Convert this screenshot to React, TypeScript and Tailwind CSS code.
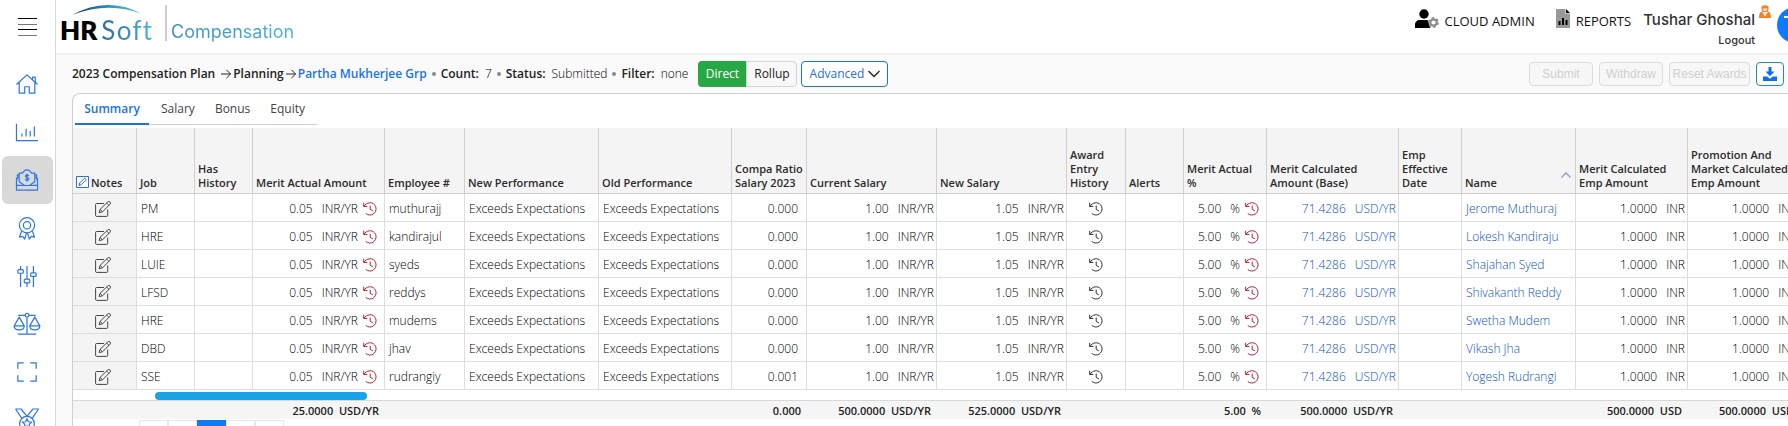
import React from "react";

type IconProps = { className?: string };

const HistoryIcon = ({ className = "" }: IconProps) => (
  <svg viewBox="0 0 14 14" className={`h-3.5 w-3.5 shrink-0 ${className}`} fill="none" stroke="currentColor" strokeWidth="1" strokeLinecap="round" strokeLinejoin="round" aria-hidden="true">
    <path d="M.7 1.2v3.2h3.3M1 4.200C3.400 .1 9 -.3 11.600 2.800c3.400 4.200.4 10.400-5 10.200-1.400-.1-2.600-.6-3.500-1.300" />
    <path d="M7.200 4v3.400l2.300 1.200" />
  </svg>
);

const EditIcon = () => (
  <svg viewBox="0 0 16 16" className="h-4 w-4" fill="none" stroke="currentColor" strokeWidth="1" strokeLinejoin="round" aria-hidden="true">
    <path d="M9 2.500H1.500A1 1 0 0 0 .6 3.400v11a1 1 0 0 0 .9 1h10.200a1 1 0 0 0 1-1V8.500" />
    <path d="M4.200 11.600l.8-3.200L12.600 1a1.600 1.600 0 0 1 2.400 2.300l-7.500 7.500zM5 8.400l2.500 2.400M11.500 2l2.500 2.400" />
  </svg>
);

const SideIcon = ({ children }: { children: React.ReactNode }) => (
  <svg viewBox="0 0 24 24" className="h-[22px] w-[22px] overflow-visible" fill="none" stroke="currentColor" strokeWidth="1.300" strokeLinejoin="round" aria-hidden="true">
    {children}
  </svg>
);

const nav: { label: string; active?: boolean; icon: React.ReactNode }[] = [
  { label: "Home", icon: <path d="M.5 12.500L12 2l11.500 10.500M3.500 10v12h6v-7h5v7h6V10M18 7.500V4.500h3v6" /> },
  { label: "Dashboards", icon: <path d="M.5 3v18.500H24M6.500 17v-3.500M11 17V8.500M15.500 17v-6M20 17V6" /> },
  {
    label: "Compensation",
    active: true,
    icon: (
      <>
        <path d="M3 8.500L.5 10.500v12.500h23V10.500L21 8.500M.5 17.500l7 .5h9l7-.5" />
        <path d="M3.500 4.500H7L9 2q3-2 6 0l2 2.500h3.500v9.500L14.500 18h-5L3.500 14zM3.500 6.500h-2v5M20.500 6.500h2v5" />
        <path d="M14 7.500c-.5-1-3.800-1.200-3.800.5s3.900 1 3.900 2.900c0 1.800-3.700 1.500-4.200.4M12 5v9" />
      </>
    ),
  },
  {
    label: "Awards",
    icon: (
      <>
        <circle cx="12" cy="9" r="8.300" />
        <circle cx="12" cy="9" r="4" />
        <path d="M6 15.500L3.800 22l3.400-.8L9.500 24l2-6.700M18 15.500l2.200 6.500-3.400-.8L14.500 24l-2-6.700" />
      </>
    ),
  },
  {
    label: "Adjustments",
    icon: (
      <>
        <path d="M5 1v4M5 9v15M12 1v14.500M12 19.500V24M19 1v7.500M19 12.500V24" />
        <rect x="2" y="5" width="6" height="4" rx="1" />
        <rect x="9" y="15.500" width="6" height="4" rx="1" />
        <rect x="16" y="8.500" width="6" height="4" rx="1" />
      </>
    ),
  },
  {
    label: "Balance",
    icon: (
      <>
        <path d="M2.500 2.500H10M14 2.500h7.500M12 4.500V23M2 23h20" />
        <circle cx="12" cy="2.500" r="2" />
        <path d="M3.500 4.500L-2 14c0 6 11 6 11 0zM20.500 4.500L15 14c0 6 11 6 11 0zM-2 14H9M15 14h11" />
      </>
    ),
  },
  { label: "Full screen", icon: <path d="M2 8.500V2h6.500M15.500 2H22v6.500M22 15.500V22h-6.500M8.500 22H2v-6.500" /> },
  {
    label: "Recognition",
    icon: (
      <>
        <path d="M-.5 0h6L12 8l6.500-8h6L17.500 10.500M-.5 0L6.500 10.500" />
        <circle cx="12" cy="16" r="8" />
        <path d="M12 10.500l1.500 3.400 3.700.4-2.800 2.400.8 3.600-3.200-1.900-3.200 1.900.8-3.600-2.800-2.400 3.700-.4z" />
      </>
    ),
  },
];

const rows = [
  { job: "PM", id: "muthurajj", ratio: "0.000", name: "Jerome Muthuraj" },
  { job: "HRE", id: "kandirajul", ratio: "0.000", name: "Lokesh Kandiraju" },
  { job: "LUIE", id: "syeds", ratio: "0.000", name: "Shajahan Syed" },
  { job: "LFSD", id: "reddys", ratio: "0.000", name: "Shivakanth Reddy" },
  { job: "HRE", id: "mudems", ratio: "0.000", name: "Swetha Mudem" },
  { job: "DBD", id: "jhav", ratio: "0.000", name: "Vikash Jha" },
  { job: "SSE", id: "rudrangiy", ratio: "0.001", name: "Yogesh Rudrangi" },
];

const columns = [
  { label: "Notes", width: 64 },
  { label: "Job", width: 58 },
  { label: "Has History", width: 58 },
  { label: "Merit Actual Amount", width: 132 },
  { label: "Employee #", width: 80 },
  { label: "New Performance", width: 134 },
  { label: "Old Performance", width: 133 },
  { label: "Compa Ratio Salary 2023", width: 75 },
  { label: "Current Salary", width: 130 },
  { label: "New Salary", width: 130 },
  { label: "Award Entry History", width: 59 },
  { label: "Alerts", width: 58 },
  { label: "Merit Actual\n%", width: 83 },
  { label: "Merit Calculated Amount (Base)", width: 132 },
  { label: "Emp Effective Date", width: 63 },
  { label: "Name", width: 114 },
  { label: "Merit Calculated Emp Amount", width: 112 },
  { label: "Promotion And Market Calculated Emp Amount", width: 112 },
];

const totals = ["", "", "", "25.0000 USD/YR", "", "", "", "0.000", "500.0000 USD/YR", "525.0000 USD/YR", "", "", "5.00 %", "500.0000 USD/YR", "", "", "500.0000 USD", "500.0000 USD"];

const Cell = ({ children, className = "px-1" }: { children?: React.ReactNode; className?: string }) => (
  <td className={`h-7 border-r border-b border-[#dedede] pt-0.5 pb-0 whitespace-nowrap ${className}`}>{children}</td>
);

const Amount = ({ value, unit, history = false }: { value: string; unit: string; history?: boolean }) => (
  <div className="flex items-center justify-end">
    <span>{value}</span>
    <span className="ml-[9px]">{unit}</span>
    {history && <HistoryIcon className="ml-[5px] text-[#b3202f]" />}
  </div>
);

function Sidebar() {
  return (
    <aside className="flex w-14 shrink-0 flex-col items-center border-r border-[#d8d8d8] bg-white">
      <button aria-label="Menu" className="mt-[18px] flex h-[18px] w-[19px] shrink-0 flex-col justify-between">
        <span className="h-px w-full bg-black" />
        <span className="h-px w-full bg-[#777]" />
        <span className="h-px w-full bg-black" />
        <span className="h-px w-full bg-[#777]" />
      </button>
      <nav className="mt-6 flex flex-col">
        {nav.map((n) => (
          <a
            key={n.label}
            href="#"
            aria-label={n.label}
            className={`flex h-12 w-[51px] shrink-0 items-center justify-center rounded-md pr-0.5 text-[#2b76e8] ${n.active ? "bg-[#d9d9d9]" : ""}`}
          >
            <SideIcon>{n.icon}</SideIcon>
          </a>
        ))}
      </nav>
    </aside>
  );
}

function Header() {
  return (
    <header className="flex h-[55px] shrink-0 border-b-2 border-[#f1f1f1] bg-white">
      <div className="flex pl-1">
        <div className="w-[93px] pt-[5px]">
          <svg viewBox="0 0 72 11" className="ml-3 h-[11px] w-[72px]" aria-hidden="true">
            <defs>
              <linearGradient id="arc">
                <stop offset="0" stopColor="#12344f" />
                <stop offset=".5" stopColor="#2a8fc4" />
                <stop offset="1" stopColor="#55bfe6" />
              </linearGradient>
            </defs>
            <path d="M0 10Q36-9.500 70 9Q36-4 0 10z" fill="url(#arc)" />
          </svg>
          <div className="flex items-baseline font-['Lato'] text-[26px] leading-7">
            <span className="font-extrabold text-black">HR</span>
            <span className="ml-1 bg-linear-to-r from-[#2d6c9c] to-[#4db6df] bg-clip-text tracking-wider text-transparent">Soft</span>
          </div>
        </div>
        <div className="mt-[5px] ml-3 h-9 w-0.5 self-start bg-[#d0cdcd]" />
        <span className="mt-[18px] ml-1 bg-linear-to-r from-[#3f8fb8] to-[#4cb4dc] bg-clip-text font-['Inter'] text-lg leading-7 text-transparent">Compensation</span>
      </div>
      <div className="ml-auto flex items-start whitespace-nowrap">
        <a href="#" className="mt-[9px] flex items-start text-[13px] text-[#111]">
          <svg viewBox="0 0 24 20" className="mr-1.5 h-5 w-6" aria-hidden="true">
            <circle cx="9" cy="5" r="4.700" fill="#000" />
            <path d="M0 19v-3c0-3 2-5 5-5h7c2 0 2 8 4 8z" fill="#000" />
            <circle cx="18.500" cy="13.500" r="3.200" fill="#fff" stroke="#8a8a8a" strokeWidth="2.200" />
            <circle cx="18.500" cy="13.500" r="4.700" fill="none" stroke="#8a8a8a" strokeWidth="1.400" strokeDasharray="2.500 2.420" />
          </svg>
          <span className="pt-0.5 leading-5">CLOUD ADMIN</span>
        </a>
        <a href="#" className="mt-[9px] ml-[21px] flex items-start text-[13px] text-[#111]">
          <svg viewBox="0 0 14 19" className="mr-1.5 h-[19px] w-3.5" aria-hidden="true">
            <path d="M0 0h9.500v4.500H14V19H0z" fill="#999" />
            <path d="M10 0l4 4h-4zM2.500 12h2v4h-2zM6 9h2v7H6zM9.500 11h2v5h-2z" fill="#000" />
          </svg>
          <span className="pt-0.5 leading-5">REPORTS</span>
        </a>
        <div className="ml-3 flex flex-col items-end pt-2 font-['Inter'] text-[#333]">
          <span className="text-[15px] leading-6 font-medium">Tushar Ghoshal</span>
          <a href="#" className="text-[11px] leading-4 font-medium">Logout</a>
        </div>
        <svg viewBox="0 0 12 13" className="mt-[5px] ml-1 h-[13px] w-3" aria-hidden="true">
          <path d="M2.500 1.500Q6-1 9.500 1.500v3L8.500 7h-5L2.500 4.500zM0 13Q0 6.500 3 6.500l3 5 3-5q3 0 3 6.500z" fill="#f58220" />
          <path d="M3.500 3.500h5L7.500 6h-3zM4 8l2 3.500L8 8z" fill="#fbe0c8" />
        </svg>
        <div className="mt-[7px] ml-1.5 w-[11px] overflow-hidden">
          <svg viewBox="0 0 36 36" className="h-9 w-9 max-w-none" role="img" aria-label="Profile">
            <circle cx="18" cy="18" r="18" fill="#0d7bff" />
            <path d="M7 10h20M17 10v16" stroke="#fff" strokeWidth="2" />
          </svg>
        </div>
      </div>
    </header>
  );
}

const Dot = () => <span className="mx-[5px] h-1 w-1 rounded-full bg-[#888]" />;
const Arrow = () => (
  <svg viewBox="0 0 12 12" className="mx-0.5 h-2.5 w-2.5" fill="none" stroke="#222" strokeWidth="1.200" aria-hidden="true">
    <path d="M0 6h11.500M6.500 1L11.500 6l-5 5" />
  </svg>
);

function Toolbar() {
  const disabled = "h-6 rounded border border-[#dcdcdc] bg-[#f7f7f7] font-['Liberation_Sans'] text-[12px] text-[#cfcfcf]";
  return (
    <div className="flex h-[38px] shrink-0 items-center pr-1 pl-4 text-[12px] whitespace-nowrap text-[#222]">
      <b className="mr-1 font-semibold">2023 Compensation Plan</b>
      <Arrow />
      <b className="font-semibold">Planning</b>
      <Arrow />
      <a href="#" className="font-semibold text-[#1a73e8]">Partha Mukherjee Grp</a>
      <Dot />
      <b className="font-semibold">Count:</b>
      <span className="ml-1.5 font-light text-black">7</span>
      <Dot />
      <b className="font-semibold">Status:</b>
      <span className="ml-1.5 font-light text-black">Submitted</span>
      <Dot />
      <b className="font-semibold">Filter:</b>
      <span className="ml-1.5 font-light text-black">none</span>
      <div className="ml-2.5 flex h-[26px]">
        <button className="w-12 rounded-l bg-[#28a745] text-white">Direct</button>
        <button className="w-[51px] rounded-r border border-[#d5d5d5] bg-[#f8f8f8]">Rollup</button>
      </div>
      <button className="ml-1 flex h-[26px] w-[87px] items-center justify-center gap-1 rounded border border-[#1a73d8] bg-white text-[#2a70d8]">
        Advanced
        <svg viewBox="0 0 12 8" className="h-2 w-3" fill="none" stroke="#222" strokeWidth="1.300" aria-hidden="true">
          <path d="M.5 1L6 6.500 11.500 1" />
        </svg>
      </button>
      <div className="ml-auto flex gap-1.5">
        <button disabled className={`${disabled} w-16`}>Submit</button>
        <button disabled className={`${disabled} w-16`}>Withdraw</button>
        <button disabled className={`${disabled} w-[81px]`}>Reset Awards</button>
        <button aria-label="Download" className="flex h-6 w-7 items-center justify-center rounded border border-[#238f9c] bg-white text-[#0d6efd]">
          <svg viewBox="0 0 14 14" className="h-3.5 w-3.5" fill="currentColor" aria-hidden="true">
            <path d="M5.500 0h3v4.500h3L7 9.300 2.500 4.500h3zM0 9.500h4.200L7 11.800l2.800-2.300H14V14H0z" />
          </svg>
        </button>
      </div>
    </div>
  );
}

function Grid() {
  return (
    <div className="overflow-hidden">
      <table className="w-[1727px] table-fixed border-separate border-spacing-0 text-[12px] leading-4 font-light text-black">
        <colgroup>
          {columns.map((c) => (
            <col key={c.label} style={{ width: c.width }} />
          ))}
        </colgroup>
        <thead>
          <tr className="bg-[#f4f4f4] text-[#2b2b2b]">
            {columns.map((c, i) => (
              <th key={c.label} className="h-[66px] border-r border-b border-[#cfcfcf] pr-0 pb-[3px] pl-[3px] text-left align-bottom text-[11px] leading-3.5 font-semibold whitespace-pre-line">
                <div className="flex items-end">
                  {i === 0 && (
                    <svg viewBox="0 0 13 12" className="mr-0.5 mb-0.5 h-3 w-[13px] shrink-0" fill="#fff" stroke="#2f6fe0" aria-hidden="true">
                      <path d="M.5.5h12v11H.5zM3 9.500l.7-2.500 5-5 1.600 1.600-5 5z" />
                    </svg>
                  )}
                  {c.label}
                  {c.label === "Name" && (
                    <svg viewBox="0 0 10 6" className="mr-1 mb-3 ml-auto h-1.5 w-2.5" fill="none" stroke="#7fa3d0" strokeWidth="1.300" aria-hidden="true">
                      <path d="M.5 5.500L5 1l4.500 4.500" />
                    </svg>
                  )}
                </div>
              </th>
            ))}
          </tr>
        </thead>
        <tbody>
          {rows.map((r) => (
            <tr key={r.id}>
              <Cell className="bg-[#f4f4f4] px-1 text-[#444]">
                <button aria-label={`Edit notes for ${r.name}`} className="ml-[18px] block">
                  <EditIcon />
                </button>
              </Cell>
              <Cell>{r.job}</Cell>
              <Cell />
              <Cell className="pr-[7px]"><Amount value="0.05" unit="INR/YR" history /></Cell>
              <Cell>{r.id}</Cell>
              <Cell>Exceeds Expectations</Cell>
              <Cell>Exceeds Expectations</Cell>
              <Cell className="pr-2 text-right">{r.ratio}</Cell>
              <Cell className="pr-0.5"><Amount value="1.00" unit="INR/YR" /></Cell>
              <Cell className="pr-0.5"><Amount value="1.05" unit="INR/YR" /></Cell>
              <Cell className="px-1 text-[#333]"><HistoryIcon className="mx-auto" /></Cell>
              <Cell />
              <Cell className="pr-[7px]"><Amount value="5.00" unit="%" history /></Cell>
              <Cell className="pr-0.5 text-[#0b4fd0]"><Amount value="71.4286" unit="USD/YR" /></Cell>
              <Cell />
              <Cell><a href="#" className="text-[#0b4fd0]">{r.name}</a></Cell>
              <Cell className="pr-0.5"><Amount value="1.0000" unit="INR" /></Cell>
              <Cell className="pr-0.5"><Amount value="1.0000" unit="INR" /></Cell>
            </tr>
          ))}
        </tbody>
        <tfoot>
          <tr>
            <td colSpan={18} className="h-[11px] border-b border-[#d8d8d8] p-0 pt-px">
              <div className="ml-[82px] h-2 w-[212px] rounded-full bg-[#1aa3e6]" />
            </td>
          </tr>
          <tr className="bg-[#f5f5f5]">
            {totals.map((t, i) => (
              <td key={i} className="h-[18px] p-0 pt-0.5 pr-1.5 text-right text-[11px] leading-4 font-semibold whitespace-pre text-[#222]">{t.replace(" ", "  ")}</td>
            ))}
          </tr>
        </tfoot>
      </table>
    </div>
  );
}

export default function App() {
  const tabs = ["Summary", "Salary", "Bonus", "Equity"];
  return (
    <div className="flex h-screen overflow-hidden bg-[#fafafa] font-['Open_Sans',sans-serif]">
      <Sidebar />
      <div className="flex min-w-0 flex-1 flex-col">
        <Header />
        <Toolbar />
        <main className="ml-4 flex-1 overflow-hidden rounded-tl-lg border-t border-l border-[#d0d0d0] bg-white">
          <div className="flex h-[34px]">
            <div className="ml-0.5 flex h-[31px] border-b border-[#ccc] pr-1 text-[12px] text-[#444]">
              {tabs.map((t, i) => (
                <button key={t} className={i === 0 ? "-mb-px w-[74px] border-b-2 border-[#1a73e8] font-semibold text-[#1a73e8]" : "pr-2 pl-3"}>
                  {t}
                </button>
              ))}
            </div>
          </div>
          <Grid />
          <div className="ml-[66px] flex pt-px">
            {["«", "‹", "1", "›", "»"].map((p) => (
              <button key={p} className={`h-6 w-[29px] border text-[12px] ${p === "1" ? "border-[#0d7bff] bg-[#0d7bff] text-white" : "border-[#e8e8e8] bg-white"}`}>{p}</button>
            ))}
          </div>
        </main>
      </div>
    </div>
  );
}
